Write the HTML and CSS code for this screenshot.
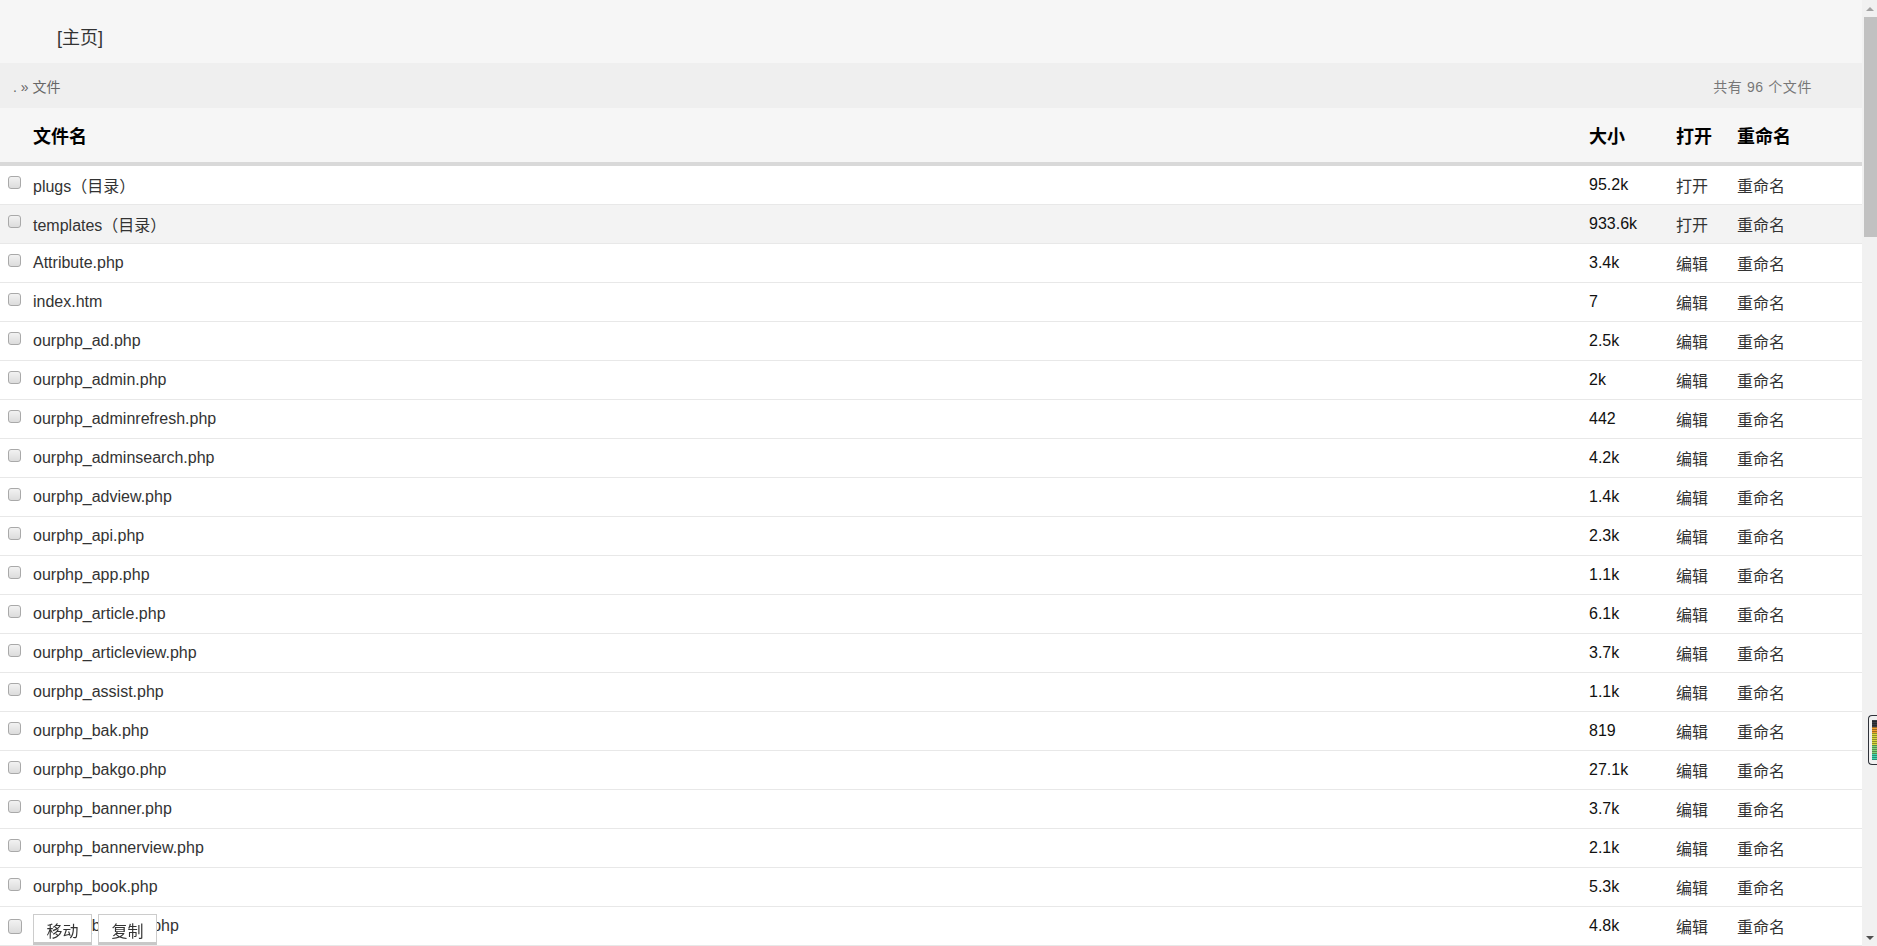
FILE: index.html
```html
<!DOCTYPE html>
<html lang="zh-CN">
<head>
    <meta charset="UTF-8">
    <meta name="viewport" content="width=device-width, initial-scale=1.0">
    <title>文件管理</title>
    <link rel="stylesheet" href="styles.css">
</head>
<body>
    <div class="page">
        <div class="topbar">[主页]</div>
        <div class="crumbs">
            <span>. » 文件</span>
            <span class="count">共有 96 个文件</span>
        </div>
        <div class="row head">
            <span></span>
            <span>文件名</span>
            <span>大小</span>
            <span>打开</span>
            <span>重命名</span>
        </div>
        <div class="list">
            <div class="row"><span><input type="checkbox"></span><span>plugs（目录）</span><span class="size">95.2k</span><span>打开</span><span>重命名</span></div>
            <div class="row hover"><span><input type="checkbox"></span><span>templates（目录）</span><span class="size">933.6k</span><span>打开</span><span>重命名</span></div>
            <div class="row"><span><input type="checkbox"></span><span>Attribute.php</span><span class="size">3.4k</span><span>编辑</span><span>重命名</span></div>
            <div class="row"><span><input type="checkbox"></span><span>index.htm</span><span class="size">7</span><span>编辑</span><span>重命名</span></div>
            <div class="row"><span><input type="checkbox"></span><span>ourphp_ad.php</span><span class="size">2.5k</span><span>编辑</span><span>重命名</span></div>
            <div class="row"><span><input type="checkbox"></span><span>ourphp_admin.php</span><span class="size">2k</span><span>编辑</span><span>重命名</span></div>
            <div class="row"><span><input type="checkbox"></span><span>ourphp_adminrefresh.php</span><span class="size">442</span><span>编辑</span><span>重命名</span></div>
            <div class="row"><span><input type="checkbox"></span><span>ourphp_adminsearch.php</span><span class="size">4.2k</span><span>编辑</span><span>重命名</span></div>
            <div class="row"><span><input type="checkbox"></span><span>ourphp_adview.php</span><span class="size">1.4k</span><span>编辑</span><span>重命名</span></div>
            <div class="row"><span><input type="checkbox"></span><span>ourphp_api.php</span><span class="size">2.3k</span><span>编辑</span><span>重命名</span></div>
            <div class="row"><span><input type="checkbox"></span><span>ourphp_app.php</span><span class="size">1.1k</span><span>编辑</span><span>重命名</span></div>
            <div class="row"><span><input type="checkbox"></span><span>ourphp_article.php</span><span class="size">6.1k</span><span>编辑</span><span>重命名</span></div>
            <div class="row"><span><input type="checkbox"></span><span>ourphp_articleview.php</span><span class="size">3.7k</span><span>编辑</span><span>重命名</span></div>
            <div class="row"><span><input type="checkbox"></span><span>ourphp_assist.php</span><span class="size">1.1k</span><span>编辑</span><span>重命名</span></div>
            <div class="row"><span><input type="checkbox"></span><span>ourphp_bak.php</span><span class="size">819</span><span>编辑</span><span>重命名</span></div>
            <div class="row"><span><input type="checkbox"></span><span>ourphp_bakgo.php</span><span class="size">27.1k</span><span>编辑</span><span>重命名</span></div>
            <div class="row"><span><input type="checkbox"></span><span>ourphp_banner.php</span><span class="size">3.7k</span><span>编辑</span><span>重命名</span></div>
            <div class="row"><span><input type="checkbox"></span><span>ourphp_bannerview.php</span><span class="size">2.1k</span><span>编辑</span><span>重命名</span></div>
            <div class="row"><span><input type="checkbox"></span><span>ourphp_book.php</span><span class="size">5.3k</span><span>编辑</span><span>重命名</span></div>
            <div class="row"><span><input type="checkbox" class="big"></span><span>ourphp_bookset.php</span><span class="size">4.8k</span><span>编辑</span><span>重命名</span></div>
        </div>
        <div class="actions">
            <button>移动</button>
            <button>复制</button>
        </div>
    </div>
    <div class="scrollbar">
        <div class="arrow up"></div>
        <div class="track"><div class="thumb"></div></div>
        <div class="arrow down"></div>
    </div>
    <div class="meter"></div>
</body>
</html>
```

FILE: styles.css
```css
:root {
    --text-color: #333;
    --line-color: #e8e8e8;
    --bar-bg: #f6f6f6;
}

html, body {
    height: 100%;
}

body {
    margin: 0;
    display: flex;
    overflow: hidden;
    font-family: "Liberation Sans", "Noto Sans CJK SC", sans-serif;
    color: var(--text-color);
    background-color: white;
}

.page {
    flex: 1;
    min-width: 0;
}

.topbar {
    height: 63px;
    box-sizing: border-box;
    padding: 27px 0 0 57px;
    background-color: var(--bar-bg);
    font-size: 18px;
    line-height: 22px;
}

.crumbs {
    height: 45px;
    display: flex;
    align-items: center;
    justify-content: space-between;
    padding: 0 50px 0 13px;
    background-color: #efefef;
    color: #666;
    font-size: 14px;
}

.crumbs .count {
    color: #777;
    letter-spacing: 0.6px;
}

.row {
    display: grid;
    grid-template-columns: 33px 1fr 87px 61px 125px;
    align-items: center;
    height: 38px;
    border-bottom: 1px solid var(--line-color);
    font-size: 16px;
    white-space: nowrap;
}

.row.head {
    height: 54px;
    background-color: var(--bar-bg);
    border-bottom: 4px solid #d9d9d9;
    font-size: 18px;
    font-weight: bold;
    color: #000;
}

.row.hover {
    background-color: #f3f3f3;
}

.row .size {
    color: #111;
}

.row input {
    appearance: none;
    display: block;
    width: 13px;
    height: 13px;
    margin: -5px 0 0 8px;
    border: 1px solid #a9a9a9;
    border-radius: 3px;
    background: linear-gradient(to bottom, #f2f2f2, #dcdcdc);
    box-sizing: border-box;
}

.row input.big {
    width: 14px;
    height: 15px;
    margin-top: 0;
}

.actions {
    position: fixed;
    left: 33px;
    bottom: 1px;
    display: flex;
    gap: 6px;
}

.actions button {
    width: 59px;
    height: 31px;
    padding: 3px 0 0;
    background-color: white;
    border: 1px solid #ccc;
    border-bottom: 3px solid #c8c8c8;
    font-family: inherit;
    font-size: 16px;
    color: var(--text-color);
}

.scrollbar {
    width: 15px;
    display: flex;
    flex-direction: column;
    background-color: #f1f1f1;
}

.arrow {
    height: 17px;
    display: flex;
    align-items: center;
    justify-content: center;
}

.arrow::before {
    content: "";
    border-left: 4px solid transparent;
    border-right: 4px solid transparent;
}

.arrow.up::before {
    border-bottom: 4px solid #a3a3a3;
}

.arrow.down::before {
    border-top: 4px solid #505050;
}

.track {
    flex: 1;
    padding: 0 0 0 2px;
}

.thumb {
    height: 220px;
    background-color: #c1c1c1;
}

.meter {
    position: absolute;
    right: 0;
    top: 715px;
    width: 5px;
    height: 40px;
    border: 1px solid #2f323a;
    border-right: none;
    border-radius: 4px 0 0 4px;
    background:
        repeating-linear-gradient(to bottom, transparent 0 1px, rgba(0,0,0,0.35) 1px 2px),
        linear-gradient(to bottom, #3a3d47 0 22%, #f0a030 22% 35%, #d8d840 35% 60%, #7ed67a 60% 80%, #40d8b0 80% 92%, #3a3d47 92%);
    background-clip: content-box;
    padding: 4px 0 4px 3px;
    background-color: #4b4f5c;
}
```
